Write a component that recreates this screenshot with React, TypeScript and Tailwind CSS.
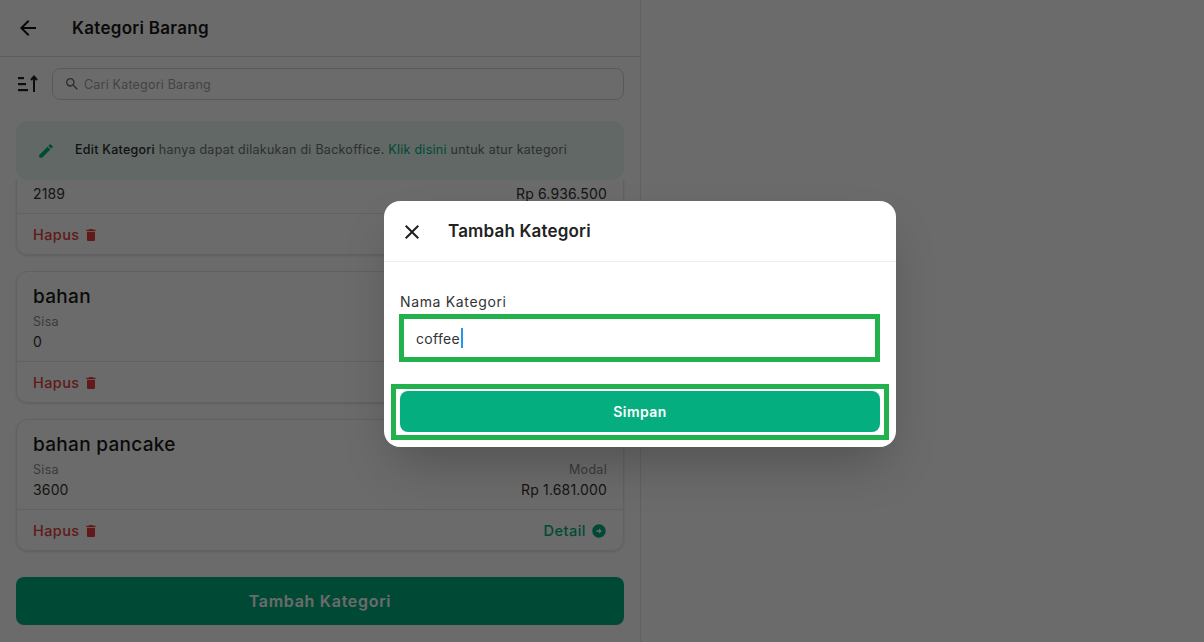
import {
  MdArrowBack,
  MdArrowCircleRight,
  MdClose,
  MdDelete,
  MdEdit,
  MdSearch,
} from 'react-icons/md';

const categories = [
  { name: 'bahan baku', stock: '2189', cost: 'Rp 6.936.500' },
  { name: 'bahan', stock: '0', cost: 'Rp 0' },
  { name: 'bahan pancake', stock: '3600', cost: 'Rp 1.681.000' },
];

function SortIcon() {
  return (
    <svg width="22" height="20" viewBox="0 0 22 20" className="text-[#1f1f1f]">
      <rect x="1" y="3" width="6" height="2.2" fill="currentColor" />
      <rect x="1" y="9" width="8" height="2.2" fill="currentColor" />
      <rect x="1" y="15" width="10" height="2.2" fill="currentColor" />
      <path d="M17 18V3M14 6l3-3.5L20 6" fill="none" stroke="currentColor" strokeWidth="2" />
    </svg>
  );
}

function CategoryCard({ name, stock, cost }: { name: string; stock: string; cost: string }) {
  return (
    <div className="shrink-0 h-[132px] rounded-xl border border-[#e5e7eb] shadow-sm">
      <div className="h-[90px] px-4 pt-[12px] border-b border-[#e5e7eb]">
        <div className="text-[19px] leading-[26px] font-medium tracking-[0.3px] text-[#1a1a1a]">{name}</div>
        <div className="mt-[3px] flex justify-between">
          <div>
            <div className="text-[12.5px] leading-[18px] tracking-[0.3px] text-[#8a8a8a]">Sisa</div>
            <div className="mt-[1px] text-[14px] leading-5 tracking-[0.15px] text-[#333]">{stock}</div>
          </div>
          <div className="text-right">
            <div className="text-[12.5px] leading-[18px] tracking-[0.3px] text-[#8a8a8a]">Modal</div>
            <div className="mt-[1px] text-[14px] leading-5 tracking-[0.15px] text-[#333]">{cost}</div>
          </div>
        </div>
      </div>
      <div className="h-[40px] px-4 pt-px flex items-center justify-between">
        <div className="flex items-center gap-[3px] text-[14.5px] font-medium tracking-[0.4px] text-[#e53e3e]">
          Hapus <MdDelete size={16} />
        </div>
        <div className="flex items-center gap-[5px] text-[14.5px] font-medium tracking-[0.5px] text-[#00b07f]">
          Detail <MdArrowCircleRight size={16} />
        </div>
      </div>
    </div>
  );
}

export default function App() {
  return (
    <div className="relative h-[642px] w-[1204px] overflow-hidden bg-white font-['Inter',sans-serif]">
      <div className="flex h-full w-[641px] flex-col border-r border-[#e5e7eb]">
        <header className="flex h-[57px] shrink-0 items-center gap-[32px] border-b border-[#e0e0e0] pl-4">
          <MdArrowBack size={24} className="text-[#111]" />
          <h1 className="pt-px text-[17px] font-semibold tracking-[0.28px] text-[#1a1a1a]">Kategori Barang</h1>
        </header>

        <div className="mt-[11px] flex shrink-0 items-center gap-[13px] pl-[17px] pr-4">
          <SortIcon />
          <div className="flex h-[32px] flex-1 items-center gap-[4px] rounded-lg border border-[#d4d4d4] pl-[11px]">
            <MdSearch size={16} className="text-[#6b6b6b]" />
            <span className="pt-[2px] text-[12.5px] tracking-[0.2px] text-[#a0a0a0]">Cari Kategori Barang</span>
          </div>
        </div>

        <div className="mx-4 mt-[21px] flex h-[59px] shrink-0 items-center rounded-xl bg-[#e6f8f1] pl-[13px]">
          <div className="flex h-[34px] w-[34px] items-center justify-center bg-[#eaf8f3]">
            <MdEdit size={18} className="text-[#00b07f]" />
          </div>
          <p className="ml-[12px] text-[12.5px] tracking-[0.26px] text-[#707070]">
            <span className="font-medium text-[#2b2b2b]">Edit Kategori</span> hanya dapat dilakukan di Backoffice.{' '}
            <span className="text-[#00b07f]">Klik disini</span> untuk atur kategori
          </p>
        </div>

        <div className="flex h-[381px] shrink-0 flex-col justify-end gap-4 overflow-hidden px-4 pb-[10px]">
          {categories.map((c) => (
            <CategoryCard key={c.name} {...c} />
          ))}
        </div>

        <button className="mx-4 mt-[16px] h-[48px] shrink-0 rounded-lg bg-[#00b07f] text-[16px] font-semibold tracking-[0.7px] text-white">
          Tambah Kategori
        </button>
      </div>

      <div className="absolute inset-0 bg-[rgba(0,0,0,0.58)] pl-[384px] pt-[201px]">
        <div className="h-[246px] w-[512px] rounded-2xl bg-white shadow-2xl">
          <div className="flex h-[61px] items-center gap-[24px] border-b border-[#eeeeee] pl-4 pt-px">
            <MdClose size={24} className="text-[#1f1f1f]" />
            <h2 className="pt-px text-[17px] font-semibold tracking-[0.17px] text-[#222]">Tambah Kategori</h2>
          </div>
          <div className="px-4 pt-[30px]">
            <label className="block text-[14px] leading-[20px] tracking-[0.65px] text-[#333]">Nama Kategori</label>
            <div className="relative mt-[4px] flex h-[44px] items-center pl-4 text-[14px] tracking-[0.3px] text-[#333]">
              coffee
              <span className="ml-[1px] h-[20px] w-[2px] bg-[#2196f3]" />
              <span className="absolute -left-px -top-[2px] -bottom-[2px] right-0 border-[5px] border-[#22b14c]" />
            </div>
            <div className="relative mt-[31px]">
              <button className="block h-[41px] w-full rounded-lg bg-[#05ae7f] text-[14px] font-semibold tracking-[0.45px] text-white">
                Simpan
              </button>
              <span className="absolute -left-[9px] -right-[9px] -top-[7px] -bottom-[8px] border-[5px] border-[#22b14c]" />
            </div>
          </div>
        </div>
      </div>
    </div>
  );
}
